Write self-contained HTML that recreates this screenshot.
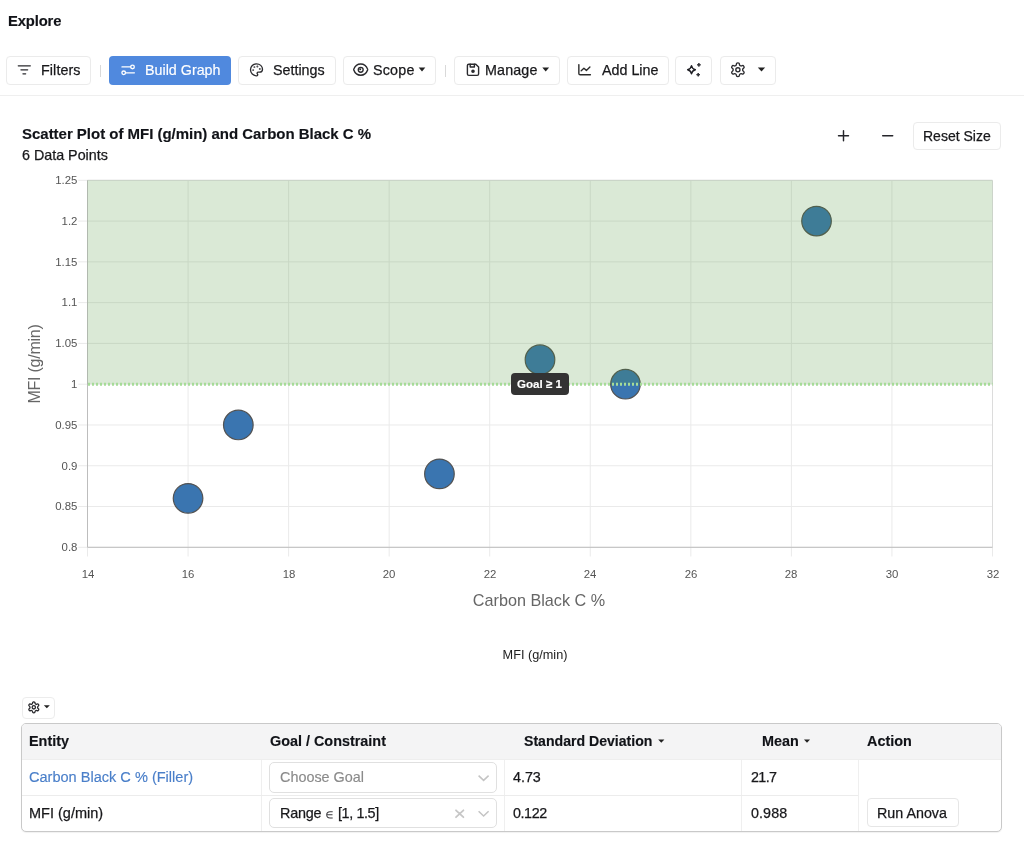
<!DOCTYPE html>
<html><head><meta charset="utf-8"><title>Explore</title>
<style>
html,body{margin:0;padding:0;background:#fff;width:1024px;height:858px;overflow:hidden;}
body{position:relative;font-family:"Liberation Sans", sans-serif;}
.t{position:absolute;white-space:nowrap;will-change:transform;}
.b{position:absolute;box-sizing:border-box;}
.ov{position:absolute;left:0;top:0;}
</style></head><body>
<svg class="ov" width="1024" height="858" viewBox="0 0 1024 858"><path d="M87.50 180.3V556.5" stroke="#eaeaea" stroke-width="1"/><path d="M188.06 180.3V556.5" stroke="#eaeaea" stroke-width="1"/><path d="M288.61 180.3V556.5" stroke="#eaeaea" stroke-width="1"/><path d="M389.17 180.3V556.5" stroke="#eaeaea" stroke-width="1"/><path d="M489.72 180.3V556.5" stroke="#eaeaea" stroke-width="1"/><path d="M590.28 180.3V556.5" stroke="#eaeaea" stroke-width="1"/><path d="M690.83 180.3V556.5" stroke="#eaeaea" stroke-width="1"/><path d="M791.39 180.3V556.5" stroke="#eaeaea" stroke-width="1"/><path d="M891.94 180.3V556.5" stroke="#eaeaea" stroke-width="1"/><path d="M992.50 180.3V556.5" stroke="#eaeaea" stroke-width="1"/><path d="M78.3 547.30H992.5" stroke="#eaeaea" stroke-width="1"/><path d="M78.3 506.52H992.5" stroke="#eaeaea" stroke-width="1"/><path d="M78.3 465.74H992.5" stroke="#eaeaea" stroke-width="1"/><path d="M78.3 424.97H992.5" stroke="#eaeaea" stroke-width="1"/><path d="M78.3 384.19H992.5" stroke="#eaeaea" stroke-width="1"/><path d="M78.3 343.41H992.5" stroke="#eaeaea" stroke-width="1"/><path d="M78.3 302.63H992.5" stroke="#eaeaea" stroke-width="1"/><path d="M78.3 261.86H992.5" stroke="#eaeaea" stroke-width="1"/><path d="M78.3 221.08H992.5" stroke="#eaeaea" stroke-width="1"/><path d="M78.3 180.30H992.5" stroke="#eaeaea" stroke-width="1"/><path d="M87.5 180.3H992.5V547.3" stroke="#dcdcdc" stroke-width="1" fill="none"/><path d="M87.5 180.3V547.3H992.5" stroke="#bdbdbd" stroke-width="1" fill="none"/><circle cx="188.06" cy="498.37" r="14.8" fill="#3a75b0" stroke="#525252" stroke-width="1.2"/><circle cx="238.33" cy="424.97" r="14.8" fill="#3a75b0" stroke="#525252" stroke-width="1.2"/><circle cx="439.44" cy="473.90" r="14.8" fill="#3a75b0" stroke="#525252" stroke-width="1.2"/><circle cx="540.00" cy="359.72" r="14.8" fill="#3a75b0" stroke="#525252" stroke-width="1.2"/><circle cx="625.47" cy="384.19" r="14.8" fill="#3a75b0" stroke="#525252" stroke-width="1.2"/><circle cx="816.53" cy="221.08" r="14.8" fill="#3a75b0" stroke="#525252" stroke-width="1.2"/><rect x="87.5" y="180.3" width="905.0" height="203.89" fill="rgb(80,150,60)" fill-opacity="0.21"/><path d="M88.0 384.19H992.5" stroke="#a6dc98" stroke-width="3" stroke-dasharray="2 2"/><rect x="511" y="373" width="58" height="22" rx="4" fill="#333"/></svg>
<div class="t" style="left:7.70px;top:13.72px;font-size:14.8px;line-height:14.8px;font-weight:700;color:#111318;letter-spacing:-0.15px;-webkit-text-stroke:0.15px #111318;">Explore</div><div class="b" style="left:5.60px;top:55.60px;width:85.40px;height:29.10px;background:#fff;border:1px solid #ebebeb;border-radius:4px;"></div><div class="b" style="left:238.00px;top:55.60px;width:98.00px;height:29.10px;background:#fff;border:1px solid #ebebeb;border-radius:4px;"></div><div class="b" style="left:342.50px;top:55.60px;width:93.50px;height:29.10px;background:#fff;border:1px solid #ebebeb;border-radius:4px;"></div><div class="b" style="left:454.00px;top:55.60px;width:105.50px;height:29.10px;background:#fff;border:1px solid #ebebeb;border-radius:4px;"></div><div class="b" style="left:566.60px;top:55.60px;width:102.60px;height:29.10px;background:#fff;border:1px solid #ebebeb;border-radius:4px;"></div><div class="b" style="left:675.30px;top:55.60px;width:37.10px;height:29.10px;background:#fff;border:1px solid #ebebeb;border-radius:4px;"></div><div class="b" style="left:719.50px;top:55.60px;width:56.00px;height:29.10px;background:#fff;border:1px solid #ebebeb;border-radius:4px;"></div><div class="b" style="left:109.20px;top:55.80px;width:122.30px;height:29.20px;background:#5089de;border:none;border-radius:4px;"></div><div class="b" style="left:100.30px;top:64.50px;width:1.00px;height:12.00px;background:#d9d9d9;border:none;border-radius:0px;"></div><div class="b" style="left:444.60px;top:64.50px;width:1.00px;height:12.00px;background:#d9d9d9;border:none;border-radius:0px;"></div><div class="t" style="left:40.70px;top:62.75px;font-size:14.3px;line-height:14.3px;font-weight:400;color:#18181b;letter-spacing:0.1px;-webkit-text-stroke:0.25px #18181b;">Filters</div><div class="t" style="left:144.80px;top:62.75px;font-size:14.3px;line-height:14.3px;font-weight:400;color:#fff;letter-spacing:0px;-webkit-text-stroke:0.15px #fff;">Build Graph</div><div class="t" style="left:272.90px;top:62.75px;font-size:14.3px;line-height:14.3px;font-weight:400;color:#18181b;letter-spacing:0px;-webkit-text-stroke:0.25px #18181b;">Settings</div><div class="t" style="left:373.40px;top:62.75px;font-size:14.3px;line-height:14.3px;font-weight:400;color:#18181b;letter-spacing:0.2px;-webkit-text-stroke:0.25px #18181b;">Scope</div><div class="t" style="left:484.90px;top:62.75px;font-size:14.3px;line-height:14.3px;font-weight:400;color:#18181b;letter-spacing:0.15px;-webkit-text-stroke:0.25px #18181b;">Manage</div><div class="t" style="left:601.70px;top:62.75px;font-size:14.3px;line-height:14.3px;font-weight:400;color:#18181b;letter-spacing:0px;-webkit-text-stroke:0.25px #18181b;">Add Line</div><div class="b" style="left:0.00px;top:94.50px;width:1024.00px;height:1.00px;background:#efefef;border:none;border-radius:0px;"></div><div class="t" style="left:22.00px;top:125.65px;font-size:15px;line-height:15px;font-weight:700;color:#111318;letter-spacing:-0.02px;-webkit-text-stroke:0.15px #111318;">Scatter Plot of MFI (g/min) and Carbon Black C %</div><div class="t" style="left:22.00px;top:147.75px;font-size:14.3px;line-height:14.3px;font-weight:400;color:#18181b;letter-spacing:0px;-webkit-text-stroke:0.25px #18181b;">6 Data Points</div><div class="b" style="left:912.70px;top:122.00px;width:88.60px;height:27.80px;background:#fff;border:1px solid #ebebeb;border-radius:4px;"></div><div class="t" style="left:922.70px;top:129.10px;font-size:14px;line-height:14px;font-weight:400;color:#18181b;letter-spacing:0px;-webkit-text-stroke:0.25px #18181b;">Reset Size</div><div class="t" style="left:0;width:77.4px;text-align:right;top:542.11px;font-size:11.4px;line-height:11.4px;color:#555;-webkit-text-stroke:0">0.8</div><div class="t" style="left:0;width:77.4px;text-align:right;top:501.33px;font-size:11.4px;line-height:11.4px;color:#555;-webkit-text-stroke:0">0.85</div><div class="t" style="left:0;width:77.4px;text-align:right;top:460.55px;font-size:11.4px;line-height:11.4px;color:#555;-webkit-text-stroke:0">0.9</div><div class="t" style="left:0;width:77.4px;text-align:right;top:419.78px;font-size:11.4px;line-height:11.4px;color:#555;-webkit-text-stroke:0">0.95</div><div class="t" style="left:0;width:77.4px;text-align:right;top:379.00px;font-size:11.4px;line-height:11.4px;color:#555;-webkit-text-stroke:0">1</div><div class="t" style="left:0;width:77.4px;text-align:right;top:338.22px;font-size:11.4px;line-height:11.4px;color:#555;-webkit-text-stroke:0">1.05</div><div class="t" style="left:0;width:77.4px;text-align:right;top:297.44px;font-size:11.4px;line-height:11.4px;color:#555;-webkit-text-stroke:0">1.1</div><div class="t" style="left:0;width:77.4px;text-align:right;top:256.67px;font-size:11.4px;line-height:11.4px;color:#555;-webkit-text-stroke:0">1.15</div><div class="t" style="left:0;width:77.4px;text-align:right;top:215.89px;font-size:11.4px;line-height:11.4px;color:#555;-webkit-text-stroke:0">1.2</div><div class="t" style="left:0;width:77.4px;text-align:right;top:175.11px;font-size:11.4px;line-height:11.4px;color:#555;-webkit-text-stroke:0">1.25</div><div class="t" style="left:57.50px;width:60px;text-align:center;top:568.61px;font-size:11.4px;line-height:11.4px;color:#555;-webkit-text-stroke:0">14</div><div class="t" style="left:158.06px;width:60px;text-align:center;top:568.61px;font-size:11.4px;line-height:11.4px;color:#555;-webkit-text-stroke:0">16</div><div class="t" style="left:258.61px;width:60px;text-align:center;top:568.61px;font-size:11.4px;line-height:11.4px;color:#555;-webkit-text-stroke:0">18</div><div class="t" style="left:359.17px;width:60px;text-align:center;top:568.61px;font-size:11.4px;line-height:11.4px;color:#555;-webkit-text-stroke:0">20</div><div class="t" style="left:459.72px;width:60px;text-align:center;top:568.61px;font-size:11.4px;line-height:11.4px;color:#555;-webkit-text-stroke:0">22</div><div class="t" style="left:560.28px;width:60px;text-align:center;top:568.61px;font-size:11.4px;line-height:11.4px;color:#555;-webkit-text-stroke:0">24</div><div class="t" style="left:660.83px;width:60px;text-align:center;top:568.61px;font-size:11.4px;line-height:11.4px;color:#555;-webkit-text-stroke:0">26</div><div class="t" style="left:761.39px;width:60px;text-align:center;top:568.61px;font-size:11.4px;line-height:11.4px;color:#555;-webkit-text-stroke:0">28</div><div class="t" style="left:861.94px;width:60px;text-align:center;top:568.61px;font-size:11.4px;line-height:11.4px;color:#555;-webkit-text-stroke:0">30</div><div class="t" style="left:962.50px;width:60px;text-align:center;top:568.61px;font-size:11.4px;line-height:11.4px;color:#555;-webkit-text-stroke:0">32</div><div class="t" style="left:439px;width:200px;text-align:center;top:591.63px;font-size:16.2px;line-height:16.2px;color:#666;-webkit-text-stroke:0">Carbon Black C %</div><div class="t" style="left:-25.4px;width:120px;text-align:center;top:355.5px;font-size:16px;line-height:16px;letter-spacing:-0.25px;color:#666;-webkit-text-stroke:0;transform:rotate(-90deg)">MFI (g/min)</div><div class="t" style="left:475px;width:120px;text-align:center;top:649.00px;font-size:12.7px;line-height:12.7px;color:#222">MFI (g/min)</div><div class="b" style="left:21.70px;top:697.00px;width:33.50px;height:21.80px;background:#fff;border:1px solid #ececec;border-radius:4px;"></div><div class="b" style="left:21.00px;top:723.20px;width:981.20px;height:109.10px;background:#fff;border:1px solid #c9c9c9;border-radius:5px;box-shadow:0 1px 1px rgba(0,0,0,0.06)"></div><div class="b" style="left:22.00px;top:724.20px;width:979.20px;height:35.40px;background:#f4f4f5;border:none;border-radius:0px;border-radius:4px 4px 0 0"></div><div class="b" style="left:22.30px;top:759.10px;width:978.70px;height:1.00px;background:#eeeeee;border:none;border-radius:0px;"></div><div class="b" style="left:261.20px;top:760.00px;width:1.00px;height:71.00px;background:#efefef;border:none;border-radius:0px;"></div><div class="b" style="left:503.60px;top:760.00px;width:1.00px;height:71.00px;background:#efefef;border:none;border-radius:0px;"></div><div class="b" style="left:741.20px;top:760.00px;width:1.00px;height:71.00px;background:#efefef;border:none;border-radius:0px;"></div><div class="b" style="left:857.90px;top:760.00px;width:1.00px;height:71.00px;background:#efefef;border:none;border-radius:0px;"></div><div class="b" style="left:22.30px;top:794.90px;width:836.10px;height:1.00px;background:#ececec;border:none;border-radius:0px;"></div><div class="t" style="left:29.20px;top:733.96px;font-size:14.4px;line-height:14.4px;font-weight:700;color:#111318;letter-spacing:0px;-webkit-text-stroke:0.15px #111318;">Entity</div><div class="t" style="left:270.00px;top:733.96px;font-size:14.4px;line-height:14.4px;font-weight:700;color:#111318;letter-spacing:0px;-webkit-text-stroke:0.15px #111318;">Goal / Constraint</div><div class="t" style="left:524.00px;top:734.22px;font-size:14.1px;line-height:14.1px;font-weight:700;color:#111318;letter-spacing:0px;-webkit-text-stroke:0.15px #111318;">Standard Deviation</div><div class="t" style="left:762.00px;top:733.96px;font-size:14.4px;line-height:14.4px;font-weight:700;color:#111318;letter-spacing:0px;-webkit-text-stroke:0.15px #111318;">Mean</div><div class="t" style="left:866.90px;top:733.96px;font-size:14.4px;line-height:14.4px;font-weight:700;color:#111318;letter-spacing:0px;-webkit-text-stroke:0.15px #111318;">Action</div><div class="t" style="left:29.20px;top:769.93px;font-size:14.55px;line-height:14.55px;font-weight:400;color:#4a7fc9;letter-spacing:0px;-webkit-text-stroke:0.15px #4a7fc9;">Carbon Black C % (Filler)</div><div class="b" style="left:269.40px;top:761.50px;width:227.40px;height:31.30px;background:#fff;border:1px solid #e0e0e0;border-radius:5px;"></div><div class="t" style="left:279.70px;top:770.06px;font-size:14.4px;line-height:14.4px;font-weight:400;color:#8a8a8a;letter-spacing:0px;-webkit-text-stroke:0.15px #8a8a8a;">Choose Goal</div><div class="t" style="left:513.20px;top:770.14px;font-size:14.3px;line-height:14.3px;font-weight:400;color:#18181b;letter-spacing:0px;-webkit-text-stroke:0.25px #18181b;">4.73</div><div class="t" style="left:750.80px;top:770.14px;font-size:14.3px;line-height:14.3px;font-weight:400;color:#18181b;letter-spacing:-0.6px;-webkit-text-stroke:0.25px #18181b;">21.7</div><div class="t" style="left:29.20px;top:805.88px;font-size:14.5px;line-height:14.5px;font-weight:400;color:#18181b;letter-spacing:0px;-webkit-text-stroke:0.25px #18181b;">MFI (g/min)</div><div class="b" style="left:269.40px;top:797.70px;width:227.40px;height:30.70px;background:#fff;border:1px solid #e0e0e0;border-radius:5px;"></div><div class="t" style="left:280.00px;top:805.96px;font-size:14.4px;line-height:14.4px;font-weight:400;color:#18181b;letter-spacing:-0.22px;-webkit-text-stroke:0.25px #18181b;">Range</div><div class="t" style="left:337.90px;top:805.96px;font-size:14.4px;line-height:14.4px;font-weight:400;color:#18181b;letter-spacing:-0.4px;-webkit-text-stroke:0.25px #18181b;">[1, 1.5]</div><div class="t" style="left:513.20px;top:806.05px;font-size:14.3px;line-height:14.3px;font-weight:400;color:#18181b;letter-spacing:-0.4px;-webkit-text-stroke:0.25px #18181b;">0.122</div><div class="t" style="left:750.80px;top:806.05px;font-size:14.3px;line-height:14.3px;font-weight:400;color:#18181b;letter-spacing:0.1px;-webkit-text-stroke:0.25px #18181b;">0.988</div><div class="b" style="left:867.20px;top:798.20px;width:91.40px;height:29.00px;background:#fff;border:1px solid #e6e6e6;border-radius:4px;"></div><div class="t" style="left:877.00px;top:806.05px;font-size:14.3px;line-height:14.3px;font-weight:400;color:#18181b;letter-spacing:0px;-webkit-text-stroke:0.25px #18181b;">Run Anova</div>
<div class="t" style="left:516.90px;top:378.44px;font-size:11.6px;line-height:11.6px;font-weight:700;color:#fff;letter-spacing:0px;-webkit-text-stroke:0.15px #fff;">Goal ≥ 1</div>
<svg class="ov" width="1024" height="858" viewBox="0 0 1024 858"><g transform="translate(16.296 61.796) scale(0.667 0.667)" stroke="#2a2a2e" stroke-width="2" fill="none" stroke-linecap="round" stroke-linejoin="round"><path d="M3 6h18M7 12h10M10 18h4"/></g><path d="M122 66.9H130.5M125.7 72.8H134.4" stroke="#fff" stroke-width="1.35" fill="none" stroke-linecap="round"/><circle cx="132.5" cy="66.9" r="1.8" stroke="#fff" stroke-width="1.35" fill="none" stroke-linecap="round"/><circle cx="123.7" cy="72.8" r="1.8" stroke="#fff" stroke-width="1.35" fill="none" stroke-linecap="round"/><g transform="translate(249.300 62.600) scale(0.6 0.6)" stroke="#2a2a2e" stroke-width="2.2" fill="none" stroke-linecap="round" stroke-linejoin="round"><path d="M12 22a1 1 0 0 1 0-20 10 9 0 0 1 10 9 5 5 0 0 1-5 5h-2.25a1.75 1.75 0 0 0-1.4 2.8l.3.4a1.75 1.75 0 0 1-1.4 2.8z"/><circle cx="13.5" cy="6.5" r=".5" fill="#2a2a2e"/><circle cx="17.5" cy="10.5" r=".5" fill="#2a2a2e"/><circle cx="6.5" cy="12.5" r=".5" fill="#2a2a2e"/><circle cx="8.5" cy="7.5" r=".5" fill="#2a2a2e"/></g><g transform="translate(352.300 60.000) scale(0.7 0.8)" stroke="#2a2a2e" stroke-width="1.9" fill="none" stroke-linecap="round" stroke-linejoin="round"><path d="M2.062 12.348a1 1 0 0 1 0-.696 10.75 10.75 0 0 1 19.876 0 1 1 0 0 1 0 .696 10.75 10.75 0 0 1-19.876 0"/></g><circle cx="360.7" cy="69.75" r="2.45" stroke="#2a2a2e" stroke-width="1.35" fill="none"/><circle cx="360.2" cy="69.3" r="1.0" fill="#2a2a2e"/><g transform="translate(464.600 61.400) scale(0.7 0.7)" stroke="#2a2a2e" stroke-width="2.0" fill="none" stroke-linecap="round" stroke-linejoin="round"><path d="M6 4h10l4 4v10a2 2 0 0 1 -2 2h-12a2 2 0 0 1 -2 -2v-12a2 2 0 0 1 2 -2"/><circle cx="12" cy="14" r="1.6" fill="#2a2a2e"/><path d="M14 4l0 4l-6 0l0 -4"/></g><path d="M578.85 64.6V73.4Q578.85 74.8 580.2 74.8H590.4M581.2 70.7L583.9 68.3L586.4 70.4L589.9 67.1" stroke="#2a2a2a" stroke-width="1.4" fill="none" stroke-linecap="round" stroke-linejoin="round"/><path d="M691.5 65.6c.5 2.6 1.4 3.6 3.9 4.15-2.5.55-3.4 1.55-3.9 4.15-.5-2.6-1.4-3.6-3.9-4.15 2.5-.55 3.4-1.55 3.9-4.15z" stroke="#1e1e24" stroke-width="1.35" fill="none" stroke-linejoin="round"/><path d="M698.9 63.2c.25 1.05.6 1.4 1.65 1.65-1.05.25-1.4.6-1.65 1.65-.25-1.05-.6-1.4-1.65-1.65 1.05-.25 1.4-.6 1.65-1.65zM698.2 73.05c.25 1.05.6 1.4 1.65 1.65-1.05.25-1.4.6-1.65 1.65-.25-1.05-.6-1.4-1.65-1.65 1.05-.25 1.4-.6 1.65-1.65z" fill="#1e1e24" stroke="#1e1e24" stroke-width="1" stroke-linejoin="round"/><g transform="translate(729.620 61.520) scale(0.69 0.69)" stroke="#2a2a2e" stroke-width="1.95" fill="none" stroke-linecap="round" stroke-linejoin="round"><path d="M12.22 2h-.44a2 2 0 0 0-2 2v.18a2 2 0 0 1-1 1.73l-.43.25a2 2 0 0 1-2 0l-.15-.08a2 2 0 0 0-2.73.73l-.22.38a2 2 0 0 0 .73 2.73l.15.1a2 2 0 0 1 1 1.72v.51a2 2 0 0 1-1 1.74l-.15.09a2 2 0 0 0-.73 2.73l.22.38a2 2 0 0 0 2.73.73l.15-.08a2 2 0 0 1 2 0l.43.25a2 2 0 0 1 1 1.73V20a2 2 0 0 0 2 2h.44a2 2 0 0 0 2-2v-.18a2 2 0 0 1 1-1.73l.43-.25a2 2 0 0 1 2 0l.15.08a2 2 0 0 0 2.73-.73l.22-.39a2 2 0 0 0-.73-2.73l-.15-.08a2 2 0 0 1-1-1.74v-.5a2 2 0 0 1 1-1.74l.15-.09a2 2 0 0 0 .73-2.73l-.22-.38a2 2 0 0 0-2.73-.73l-.15.08a2 2 0 0 1-2 0l-.43-.25a2 2 0 0 1-1-1.73V4a2 2 0 0 0-2-2z"/><circle cx="12" cy="12" r="3"/></g><path d="M418.7 67.6H425.3L422.0 71.4Z" fill="#222"/><path d="M542.3 67.5H549.1L545.7 71.5Z" fill="#222"/><path d="M757.8 67.4H765.2L761.5 71.4Z" fill="#222"/><path d="M838.5 135.7H848.5M843.5 130.7V140.7" stroke="#25252a" stroke-width="1.45" stroke-linecap="round"/><path d="M882.7 135.7H892.7" stroke="#25252a" stroke-width="1.45" stroke-linecap="round"/><g transform="translate(27.200 700.750) scale(0.55 0.55)" stroke="#2a2a2e" stroke-width="2.4" fill="none" stroke-linecap="round" stroke-linejoin="round"><path d="M12.22 2h-.44a2 2 0 0 0-2 2v.18a2 2 0 0 1-1 1.73l-.43.25a2 2 0 0 1-2 0l-.15-.08a2 2 0 0 0-2.73.73l-.22.38a2 2 0 0 0 .73 2.73l.15.1a2 2 0 0 1 1 1.72v.51a2 2 0 0 1-1 1.74l-.15.09a2 2 0 0 0-.73 2.73l.22.38a2 2 0 0 0 2.73.73l.15-.08a2 2 0 0 1 2 0l.43.25a2 2 0 0 1 1 1.73V20a2 2 0 0 0 2 2h.44a2 2 0 0 0 2-2v-.18a2 2 0 0 1 1-1.73l.43-.25a2 2 0 0 1 2 0l.15.08a2 2 0 0 0 2.73-.73l.22-.39a2 2 0 0 0-.73-2.73l-.15-.08a2 2 0 0 1-1-1.74v-.5a2 2 0 0 1 1-1.74l.15-.09a2 2 0 0 0 .73-2.73l-.22-.38a2 2 0 0 0-2.73-.73l-.15.08a2 2 0 0 1-2 0l-.43-.25a2 2 0 0 1-1-1.73V4a2 2 0 0 0-2-2z"/><circle cx="12" cy="12" r="3"/></g><path d="M43.8 705.3H49.8L46.8 708.3Z" fill="#222"/><path d="M658.2 739.6H664.4L661.3 742.8Z" fill="#222"/><path d="M804 739.6H810L807.0 742.8Z" fill="#222"/><path d="M478.6 775.6L483.6 780.4L488.6 775.6" stroke="#c4c4c4" stroke-width="1.5" fill="none"/><path d="M332.7 811.7H330Q326.7 811.7 326.7 814.8Q326.7 817.9 330 817.9H332.7M327 814.8H332.5" stroke="#3a3a3e" stroke-width="1.05" fill="none"/><path d="M456 810.3L463.4 817.2M463.4 810.3L456 817.2" stroke="#c6c6c6" stroke-width="1.8" stroke-linecap="round"/><path d="M478.6 811.2L483.6 816L488.6 811.2" stroke="#c4c4c4" stroke-width="1.5" fill="none"/></svg>
</body></html>
